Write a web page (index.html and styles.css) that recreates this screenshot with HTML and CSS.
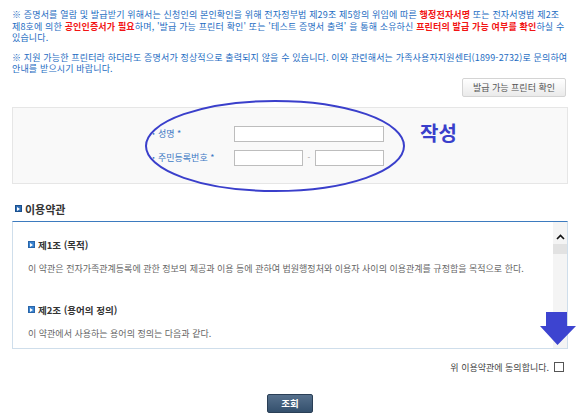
FILE: index.html
```html
<!DOCTYPE html>
<html lang="ko">
<head>
  <meta charset="UTF-8" />
  <title>증명서 발급</title>
  <link rel="stylesheet" href="styles.css">
</head>
<body>
  <main class="page">
    <p class="notice">※ 증명서를 열람 및 발급받기 위해서는 신청인의 본인확인을 위해 전자정부법 제29조 제5항의 위임에 따른 <strong>행정전자서명</strong> 또는 전자서명법 제2조 제8호에 의한 <strong>공인인증서가 필요</strong>하며, '발급 가능 프린터 확인' 또는 '테스트 증명서 출력' 을 통해 소유하신 <strong>프린터의 발급 가능 여부를 확인</strong>하실 수 있습니다.</p>
    <p class="notice">※ 지원 가능한 프린터라 하더라도 증명서가 정상적으로 출력되지 않을 수 있습니다. 이와 관련해서는 가족사용자지원센터(1899-2732)로 문의하여 안내를 받으시기 바랍니다.</p>

    <div class="printer-row">
      <button class="btn-light">발급 가능 프린터 확인</button>
    </div>

    <section class="form-box">
      <div class="form-grid">
        <label class="label"><span class="dot">·</span>성명 *</label>
        <div><input class="field field-name" type="text"></div>
        <label class="label"><span class="dot">·</span>주민등록번호 *</label>
        <div class="id-fields">
          <input class="field field-half" type="text">
          <span class="dash">-</span>
          <input class="field field-half" type="text">
        </div>
      </div>
      <svg class="ellipse" width="264" height="96" viewBox="0 0 264 96">
        <ellipse cx="132" cy="48" rx="129" ry="45" fill="none" stroke="#3a3fcb" stroke-width="2"/>
      </svg>
      <span class="memo">작성</span>
    </section>

    <h2 class="terms-title"><span class="ico"></span>이용약관</h2>

    <section class="terms">
      <div class="terms-body">
        <h3 class="article"><span class="ico small"></span>제1조 (목적)</h3>
        <p class="article-text">이 약관은 전자가족관계등록에 관한 정보의 제공과 이용 등에 관하여 법원행정처와 이용자 사이의 이용관계를 규정함을 목적으로 한다.</p>
        <h3 class="article"><span class="ico small"></span>제2조 (용어의 정의)</h3>
        <p class="article-text">이 약관에서 사용하는 용어의 정의는 다음과 같다.</p>
      </div>
      <div class="scrollbar">
        <svg class="up" width="9" height="6" viewBox="0 0 9 6"><path d="M1 5 L4.5 1.5 L8 5" fill="none" stroke="#111" stroke-width="1.6"/></svg>
        <div class="thumb"></div>
      </div>
    </section>

    <div class="agree">
      <label>위 이용약관에 동의합니다. <input type="checkbox" class="check"></label>
      <svg class="arrow" width="36" height="33" viewBox="0 0 36 33"><path d="M6 0 H27 V14 H36 L17.5 33 L0 14 H6 Z" fill="#3d44d0"/></svg>
    </div>

    <div class="actions">
      <button class="btn-dark">조회</button>
    </div>
  </main>
</body>
</html>
```

FILE: styles.css
```css
body {
  margin: 0;
  font-family: "Noto Sans CJK KR", "DejaVu Sans", sans-serif;
  font-size: 9px;
  background: #fff;
}

.page {
  padding: 9px 12px 0 12px;
}

.notice {
  margin: 0 0 8px 0;
  color: #1d6cc2;
  line-height: 11.5px;
  letter-spacing: 0.15px;
}

.notice:last-of-type {
  margin-bottom: 0;
}

.notice strong {
  color: #f21414;
}

.printer-row {
  display: flex;
  justify-content: flex-end;
  margin-top: 3px;
  padding-right: 2px;
}

.btn-light {
  font-family: inherit;
  font-size: 9px;
  color: #555;
  height: 19px;
  padding: 0 10px;
  background: linear-gradient(#ffffff, #eaeaea);
  border: 1px solid #d4d4d4;
  border-radius: 2px;
}

.form-box {
  position: relative;
  margin-top: 10px;
  height: 77px;
  background: #f9f9f9;
  border: 1px solid #e6e6e6;
  box-sizing: border-box;
  padding: 18px 0 0 138px;
}

.form-grid {
  display: grid;
  grid-template-columns: 83px auto;
  row-gap: 8px;
  align-items: center;
}

.label {
  color: #3b78c4;
}

.dot {
  display: inline-block;
  width: 6px;
  padding-left: 1px;
  font-weight: bold;
}

.field {
  height: 16px;
  box-sizing: border-box;
  border: 1px solid #bdbdbd;
  background: #fff;
  margin: 0;
}

.field-name {
  width: 150px;
}

.id-fields {
  display: flex;
  align-items: center;
}

.field-half {
  width: 69px;
}

.dash {
  width: 12px;
  text-align: center;
  color: #999;
  font-size: 8px;
}

.ellipse {
  position: absolute;
  left: 130px;
  top: -10px;
}

.memo {
  position: absolute;
  left: 407px;
  top: 10px;
  font-size: 20px;
  font-weight: bold;
  color: #3a3fcb;
}

.terms-title {
  display: flex;
  align-items: center;
  margin: 17px 0 4px 3px;
  font-size: 11px;
  font-weight: bold;
  color: #333;
}

.ico {
  display: inline-block;
  width: 7px;
  height: 7px;
  margin-right: 3px;
  background: #2f6db5;
  border: 1px solid #1b4f8c;
  box-sizing: border-box;
  position: relative;
}

.ico::after {
  content: "";
  position: absolute;
  left: 1px;
  top: 1px;
  border-left: 3px solid #fff;
  border-top: 2px solid transparent;
  border-bottom: 2px solid transparent;
}

.ico.small {
  background: #3a83d0;
  border-color: #2a65a8;
}

.terms {
  display: flex;
  height: 128px;
  box-sizing: border-box;
  border: 1px solid #cfdeeb;
  border-top: 1px solid #3d7bbf;
  overflow: hidden;
}

.terms-body {
  flex: 1;
  padding: 16px 0 0 15px;
}

.article {
  display: flex;
  align-items: center;
  margin: 0;
  font-size: 9.5px;
  font-weight: bold;
  color: #333;
}

.article-text {
  margin: 10px 0 28px 0;
  color: #666;
}

.scrollbar {
  width: 14px;
  background: #f4f4f4;
  display: flex;
  flex-direction: column;
  align-items: center;
  padding-top: 12px;
}

.thumb {
  margin-top: 4px;
  width: 14px;
  height: 10px;
  background: #e2e2e2;
}

.agree {
  position: relative;
  display: flex;
  justify-content: flex-end;
  margin-top: 12px;
  padding-right: 4px;
  color: #444;
}

.agree label {
  display: flex;
  align-items: center;
}

.check {
  width: 10px;
  height: 10px;
  margin: 0 0 0 5px;
  appearance: none;
  border: 1px solid #555;
  background: #fff;
}

.arrow {
  position: absolute;
  right: -8px;
  top: -49px;
}

.actions {
  display: flex;
  justify-content: center;
  margin-top: 20px;
}

.btn-dark {
  font-family: inherit;
  font-size: 9.5px;
  font-weight: bold;
  color: #fff;
  width: 46px;
  height: 19px;
  background: linear-gradient(#56708c, #34506d);
  border: 1px solid #2a3f56;
  border-radius: 2px;
}
```
